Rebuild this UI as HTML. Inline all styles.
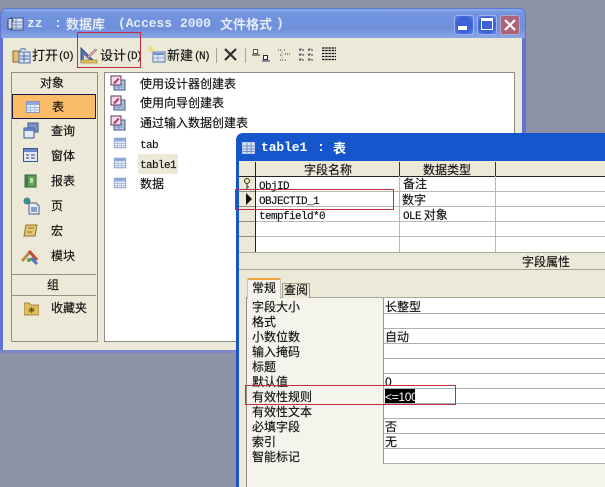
<!DOCTYPE html>
<html><head><meta charset="utf-8"><style>
html,body{margin:0;padding:0}
body{width:605px;height:487px;overflow:hidden;position:relative;background:#8e92a6;font-family:"Liberation Sans","Noto Sans CJK SC",sans-serif;color:#111;filter:blur(.3px)}
div,span,svg{position:absolute;box-sizing:border-box}
.t{white-space:nowrap;font-size:12px;line-height:14px;font-family:"Noto Sans CJK SC",sans-serif;transform:translateY(-7px);-webkit-text-stroke:.15px #111}
.m{font-family:"Liberation Mono","Noto Sans CJK SC",monospace;font-size:11px;letter-spacing:-.6px;transform:translateY(-5px)}
.b{font-size:11px;letter-spacing:-1.6px}
.tt{white-space:nowrap;font-weight:bold;color:#e6ebf6;font-size:13px;line-height:16px;transform:translateY(-8px);font-family:"Noto Sans CJK SC",sans-serif}
.ttm{font-family:"Liberation Mono",monospace;font-size:13px;letter-spacing:-.1px}
.h{height:1px;background:#a9a89c}
.v{width:1px;background:#a9a89c}
.red{border:1px solid #c0303c}
</style></head><body>
<svg width="0" height="0" style="left:0;top:0"><defs>
<symbol id="tb" viewBox="0 0 16 16"><rect x="1.5" y="2.5" width="13" height="11" fill="#e8eefa" stroke="#7f98c4"/><rect x="2" y="3" width="12" height="3" fill="#8fa9dc"/><path d="M2 8.5h12M2 11h12M5.5 6v7M10 6v7" stroke="#a9bbdc" fill="none"/></symbol>
<symbol id="wz" viewBox="0 0 16 16"><rect x="4" y="5" width="11" height="10" fill="#b9c8e4" stroke="#41598c"/><path d="M5 9h9M5 12h9M9 6v8" stroke="#7f96c2"/><rect x="1" y="1" width="10" height="9" fill="#f1dfe8" stroke="#5a3a66"/><path d="M3 8l5-5 1.500 1-4.500 5z" fill="#b52a6a"/></symbol>
</defs></svg>

<!-- main window -->
<div style="left:0;top:8px;width:526px;height:345px;background:#6272cf;border-radius:7px 7px 0 0"></div>
<div style="left:1px;top:9px;width:524px;height:29px;border-radius:6px 6px 0 0;background:linear-gradient(#8ab0ee 0,#7294e0 4px,#6f8fdc 20px,#87a5e4 28px)"></div>
<div style="left:3px;top:38px;width:519px;height:312px;background:#ece9d8"></div>
<div style="left:0;top:350px;width:526px;height:3px;background:#7a86c8"></div>

<svg style="left:7px;top:15px" width="17" height="17" viewBox="0 0 17 17"><rect x="4" y="3" width="12" height="12" fill="#dfe8f8" stroke="#34508c"/><path d="M5 7h10M5 10h10M5 13h10M9 4v10" stroke="#6f88bb"/><ellipse cx="3.5" cy="5" rx="2.5" ry="1.5" fill="#eef" stroke="#345"/><path d="M1 5v9h4V5" fill="#cbd8ee" stroke="#345"/></svg>
<span class="tt ttm" style="left:27px;top:24px">zz</span>
<span class="tt ttm" style="left:54px;top:24px">:</span>
<span class="tt" style="left:66px;top:24px">数据库</span>
<span class="tt ttm" style="left:118px;top:24px">(Access</span>
<span class="tt ttm" style="left:180px;top:24px">2000</span>
<span class="tt" style="left:220px;top:24px">文件格式</span>
<span class="tt ttm" style="left:276px;top:24px">)</span>

<div style="left:454px;top:15px;width:20px;height:20px;border-radius:3px;background:radial-gradient(#3c62d8 60%,#6d8ce4);border:1px solid #9fb4ec"><div style="left:3px;top:10px;width:9px;height:4px;background:#fff"></div></div>
<div style="left:477px;top:15px;width:20px;height:20px;border-radius:3px;background:radial-gradient(#3c62d8 60%,#6d8ce4);border:1px solid #9fb4ec"><div style="left:3px;top:2px;width:12px;height:12px;border:1px solid #fff;border-top-width:3px"></div></div>
<div style="left:500px;top:15px;width:20px;height:20px;border-radius:3px;background:#ad6478;border:1px solid #b4a8c8"><svg style="left:3px;top:3px" width="12" height="12"><path d="M1 1l10 10M11 1L1 11" stroke="#fff" stroke-width="2.2"/></svg></div>

<!-- toolbar -->
<svg style="left:12px;top:46px" width="19" height="18" viewBox="0 0 19 18"><path d="M1 5h6l2 2v9H1z" fill="#e3bd72" stroke="#8c6a2c"/><rect x="7" y="6" width="11" height="11" fill="#dbe5f5" stroke="#4b6aa5"/><path d="M8 10h9M8 13h9M12 7v9" stroke="#4b6aa5"/><path d="M8 5c1-3 4-3 6-1" stroke="#6a8fbf" fill="none" stroke-width="1.5"/></svg>
<span class="t" style="left:32px;top:55px;font-size:13px">打开</span>
<span class="t m b" style="left:58px;top:55px">(O)</span>
<svg style="left:80px;top:46px" width="18" height="18" viewBox="0 0 18 18"><path d="M1 2v14h14z" fill="#5a74b8" stroke="#3a4a80"/><path d="M4 9v5h5z" fill="#ece9d8"/><rect x="1" y="14" width="16" height="3" fill="#e2c45c" stroke="#8e7a2c" stroke-width=".6"/><path d="M7 11l8-8 2 1-8 8z" fill="#d8a0a0" stroke="#8c6060" stroke-width=".5"/></svg>
<span class="t" style="left:100px;top:55px;font-size:13px">设计</span>
<span class="t m b" style="left:126px;top:55px">(D)</span>
<svg style="left:148px;top:46px" width="18" height="18" viewBox="0 0 18 18"><rect x="5" y="6" width="12" height="10" fill="#dfe8f8" stroke="#5674a8"/><rect x="6" y="7" width="10" height="2" fill="#6f8fcc"/><path d="M6 12h10M10 9v7" stroke="#91a6cc"/><path d="M3 0v7M0 3.500h7M1 1l4 4M5 1L1 5" stroke="#eedb70"/></svg>
<span class="t" style="left:167px;top:55px;font-size:13px">新建</span>
<span class="t m b" style="left:194px;top:55px">(N)</span>
<div style="left:216px;top:48px;width:1px;height:15px;background:#a5a397"></div>
<div style="left:245px;top:48px;width:1px;height:15px;background:#a5a397"></div>
<svg style="left:223px;top:47px" width="15" height="15"><path d="M2 2l11 11M13 2L2 13" stroke="#2d2d2d" stroke-width="2.2"/></svg>
<svg style="left:252px;top:48px" width="18" height="15" viewBox="0 0 18 15"><rect x="1.500" y="1.500" width="4" height="4" fill="#fff" stroke="#555"/><path d="M0 7h8" stroke="#222"/><rect x="11.500" y="7.500" width="4" height="4" fill="#fff" stroke="#224"/><path d="M10 13h8" stroke="#224"/></svg>
<svg style="left:277px;top:48px" width="15" height="15" viewBox="0 0 15 15"><path d="M1 2h4M7 2h1M3 7h2M8 6h5M3 12h3M8 12h2" stroke="#333" stroke-dasharray="1 1"/><path d="M5 3v8" stroke="#888" stroke-dasharray="1 1"/></svg>
<svg style="left:299px;top:48px" width="16" height="15" viewBox="0 0 16 15"><path d="M0 2h6M9 2h6M0 7h6M9 7h6M0 12h6M9 12h6" stroke="#333" stroke-dasharray="2 1"/><path d="M0 1h3M0 6h3M0 11h3M9 1h3M9 6h3M9 11h3" stroke="#778" /></svg>
<svg style="left:321px;top:47px" width="16" height="15" viewBox="0 0 16 15"><path d="M1 1h14M1 3.500h14M1 6.500h14M1 9.500h14M1 12.500h14" stroke="#111" stroke-width="1.200" stroke-dasharray="2.500 .7"/></svg>

<!-- left panel -->
<div style="left:11px;top:72px;width:87px;height:270px;border:1px solid #8f8e84"></div>
<div style="left:12px;top:94px;width:84px;height:25px;background:#fbbc69;border:1px solid #1c1c3c"></div>
<span class="t" style="left:40px;top:83px">对象</span>
<span class="t" style="left:52px;top:107px">表</span>
<span class="t" style="left:51px;top:131px">查询</span>
<span class="t" style="left:51px;top:156px">窗体</span>
<span class="t" style="left:51px;top:181px">报表</span>
<span class="t" style="left:51px;top:206px">页</span>
<span class="t" style="left:51px;top:231px">宏</span>
<span class="t" style="left:51px;top:256px">模块</span>
<div class="h" style="left:12px;top:274px;width:84px;background:#94938a"></div>
<span class="t" style="left:47px;top:285px">组</span>
<div class="h" style="left:12px;top:295px;width:84px;background:#94938a"></div>
<span class="t" style="left:51px;top:308px">收藏夹</span>

<svg style="left:25px;top:99px" width="16" height="16"><use href="#tb"/></svg>
<svg style="left:23px;top:122px" width="16" height="17" viewBox="0 0 16 17"><rect x="5" y="1" width="10" height="9" fill="#7b94c8" stroke="#3d578f"/><rect x="1" y="6" width="10" height="10" fill="#e4ebf8" stroke="#3d578f"/><rect x="1" y="6" width="10" height="3" fill="#6480bd"/></svg>
<svg style="left:23px;top:148px" width="16" height="15" viewBox="0 0 16 15"><rect x=".5" y=".5" width="14" height="13" fill="#dfe8f8" stroke="#3d578f"/><rect x="1" y="1" width="13" height="3" fill="#6a88c8"/><path d="M3 7h3M3 10h3M8 7h4M8 10h4" stroke="#444"/></svg>
<svg style="left:24px;top:174px" width="13" height="14" viewBox="0 0 13 14"><rect x="1" y="1" width="11" height="12" fill="#5fa35a" stroke="#37603a"/><path d="M3 1v12" stroke="#2f4a30"/><rect x="6" y="4" width="3" height="5" fill="#c2e0a0"/></svg>
<svg style="left:23px;top:197px" width="17" height="18" viewBox="0 0 17 18"><circle cx="4" cy="4" r="3.500" fill="#3f8f8f"/><path d="M6 6h7l3 3v8H6z" fill="#e8eef8" stroke="#4a5a85"/><rect x="8" y="10" width="6" height="5" fill="#8a9cc8"/></svg>
<svg style="left:23px;top:223px" width="15" height="15" viewBox="0 0 15 15"><path d="M3 2h11l-2 11H1z" fill="#e5c56e" stroke="#8a7232"/><path d="M5 5h6M4 9h5" stroke="#8a7232"/></svg>
<svg style="left:21px;top:248px" width="19" height="18" viewBox="0 0 19 18"><path d="M1 13l8-9" stroke="#b59040" stroke-width="3"/><path d="M8 3l8 9" stroke="#c04a3a" stroke-width="3"/><path d="M10 10l6 6" stroke="#4a7cc0" stroke-width="3"/><circle cx="8" cy="12" r="2" fill="#5a9a5a"/></svg>
<svg style="left:24px;top:301px" width="15" height="15" viewBox="0 0 15 15"><path d="M0 2h5l2 2h8v10H0z" fill="#e0bd5e" stroke="#8a7232" stroke-width=".7"/><path d="M7.500 6v6M4.500 9h6M5 7l5 4M10 7l-5 4" stroke="#5c4a14" stroke-width=".8"/></svg>

<!-- list -->
<div style="left:104px;top:72px;width:411px;height:270px;background:#fff;border:1px solid #8f8e84"></div>
<svg style="left:110px;top:75px" width="16" height="16"><use href="#wz"/></svg>
<svg style="left:110px;top:95px" width="16" height="16"><use href="#wz"/></svg>
<svg style="left:110px;top:115px" width="16" height="16"><use href="#wz"/></svg>
<svg style="left:113px;top:136px" width="14" height="14" viewBox="0 0 16 16"><use href="#tb"/></svg>
<svg style="left:113px;top:156px" width="14" height="14" viewBox="0 0 16 16"><use href="#tb"/></svg>
<svg style="left:113px;top:176px" width="14" height="14" viewBox="0 0 16 16"><use href="#tb"/></svg>
<div style="left:138px;top:154px;width:40px;height:20px;background:#ece9d8"></div>
<span class="t" style="left:140px;top:84px">使用设计器创建表</span>
<span class="t" style="left:140px;top:103px">使用向导创建表</span>
<span class="t" style="left:140px;top:123px">通过输入数据创建表</span>
<span class="t m" style="left:140px;top:144px">tab</span>
<span class="t m" style="left:140px;top:164px">table1</span>
<span class="t" style="left:140px;top:184px">数据</span>

<!-- red: design -->
<div class="red" style="left:77px;top:32px;width:64px;height:36px"></div>

<!-- table window -->
<div style="left:236px;top:133px;width:369px;height:354px;background:#1656cc;border-radius:7px 0 0 0"></div>
<div style="left:239px;top:161px;width:366px;height:326px;background:#ece9d8"></div>
<svg style="left:242px;top:142px" width="13" height="12" viewBox="0 0 13 12"><rect x=".5" y=".5" width="12" height="11" fill="#dde6f6" stroke="#b9c8ea"/><path d="M1 4h11M1 7h11M1 9.500h11M5 1v10M9 1v10" stroke="#6f8cc8"/></svg>
<span class="tt ttm" style="left:261px;top:148px;color:#fff">table1</span>
<span class="tt ttm" style="left:317px;top:148px;color:#fff">:</span>
<span class="tt" style="left:333px;top:148px;color:#fff">表</span>

<!-- grid -->
<div style="left:255px;top:176px;width:350px;height:76px;background:#fff"></div>
<div class="h" style="left:239px;top:176px;width:366px;background:#222"></div>
<div class="h" style="left:255px;top:191px;width:350px;background:#b9b9b0"></div>
<div class="h" style="left:255px;top:206px;width:350px;background:#b9b9b0"></div>
<div class="h" style="left:255px;top:221px;width:350px;background:#b9b9b0"></div>
<div class="h" style="left:255px;top:236px;width:350px;background:#b9b9b0"></div>
<div class="h" style="left:239px;top:252px;width:366px;background:#a7a69a"></div>
<div class="h" style="left:239px;top:191px;width:16px;background:#8f8e84"></div>
<div class="h" style="left:239px;top:206px;width:16px;background:#8f8e84"></div>
<div class="h" style="left:239px;top:221px;width:16px;background:#8f8e84"></div>
<div class="h" style="left:239px;top:236px;width:16px;background:#8f8e84"></div>
<div style="left:255px;top:162px;width:1px;height:90px;background:#222"></div>
<div style="left:399px;top:162px;width:1px;height:14px;background:#333"></div>
<div style="left:495px;top:162px;width:1px;height:14px;background:#333"></div>
<div class="v" style="left:399px;top:176px;height:76px;background:#b9b9b0"></div>
<div class="v" style="left:495px;top:176px;height:76px;background:#b9b9b0"></div>
<span class="t" style="left:304px;top:170px">字段名称</span>
<span class="t" style="left:423px;top:170px">数据类型</span>
<svg style="left:241px;top:178px" width="12" height="12" viewBox="0 0 12 12"><circle cx="6" cy="3" r="2.500" fill="#f2e9a6" stroke="#333"/><path d="M6 5.500V11M6 9h2" stroke="#333" fill="none"/></svg>
<svg style="left:245px;top:193px" width="8" height="12"><path d="M1 0l6 6-6 6z" fill="#111"/></svg>
<span class="t m" style="left:259px;top:185px">ObjID</span>
<span class="t m" style="left:259px;top:200px">OBJECTID_1</span>
<span class="t m" style="left:259px;top:215px">tempfield*0</span>
<span class="t" style="left:403px;top:184px">备注</span>
<span class="t" style="left:402px;top:200px">数字</span>
<span class="t" style="left:403px;top:215px"><span style="position:static;font-family:'Liberation Mono';font-size:11px;letter-spacing:-.6px">OLE</span> 对象</span>
<div class="red" style="left:235px;top:189px;width:159px;height:21px"></div>

<span class="t" style="left:522px;top:262px">字段属性</span>
<div class="h" style="left:239px;top:269px;width:366px;background:#a7a69a"></div>

<!-- tabs panel -->
<div style="left:246px;top:297px;width:359px;height:190px;background:#f5f4ec;border-left:1px solid #8f8e84;border-top:1px solid #a9a89c"></div>
<div style="left:282px;top:283px;width:28px;height:15px;background:#ece9d8;border:1px solid #9d9c90;border-bottom:0"></div>
<div style="left:247px;top:278px;width:34px;height:21px;background:#f5f4ec;border:1px solid #c2c1b4;border-top:2px solid #eea33c;border-bottom:0;border-radius:2px 2px 0 0"></div>
<span class="t" style="left:252px;top:288px">常规</span>
<span class="t" style="left:284px;top:290px">查阅</span>

<!-- property grid -->
<div style="left:383px;top:298px;width:222px;height:166px;background:#fff;border-left:1px solid #8f98a4"></div>
<div class="h" style="left:383px;top:313px;width:222px;background:#a6b0bb"></div>
<div class="h" style="left:383px;top:328px;width:222px;background:#a6b0bb"></div>
<div class="h" style="left:383px;top:343px;width:222px;background:#a6b0bb"></div>
<div class="h" style="left:383px;top:358px;width:222px;background:#a6b0bb"></div>
<div class="h" style="left:383px;top:373px;width:222px;background:#a6b0bb"></div>
<div class="h" style="left:383px;top:388px;width:222px;background:#a6b0bb"></div>
<div class="h" style="left:383px;top:403px;width:222px;background:#a6b0bb"></div>
<div class="h" style="left:383px;top:418px;width:222px;background:#a6b0bb"></div>
<div class="h" style="left:383px;top:433px;width:222px;background:#a6b0bb"></div>
<div class="h" style="left:383px;top:448px;width:222px;background:#a6b0bb"></div>
<div class="h" style="left:383px;top:463px;width:222px;background:#a6b0bb"></div>
<span class="t" style="left:252px;top:307px">字段大小</span>
<span class="t" style="left:252px;top:322px">格式</span>
<span class="t" style="left:252px;top:337px">小数位数</span>
<span class="t" style="left:252px;top:352px">输入掩码</span>
<span class="t" style="left:252px;top:367px">标题</span>
<span class="t" style="left:252px;top:382px">默认值</span>
<span class="t" style="left:252px;top:397px">有效性规则</span>
<span class="t" style="left:252px;top:412px">有效性文本</span>
<span class="t" style="left:252px;top:427px">必填字段</span>
<span class="t" style="left:252px;top:442px">索引</span>
<span class="t" style="left:252px;top:457px">智能标记</span>
<span class="t" style="left:385px;top:307px">长整型</span>
<span class="t" style="left:385px;top:337px">自动</span>
<span class="t" style="left:385px;top:382px;font-family:'Liberation Sans'">0</span>
<div style="left:385px;top:389px;width:30px;height:14px;background:#000"></div>
<span class="t" style="left:385px;top:397px;color:#fff;-webkit-text-stroke:0;font-family:'Liberation Sans';letter-spacing:-.3px">&lt;=100</span>
<span class="t" style="left:385px;top:427px">否</span>
<span class="t" style="left:385px;top:442px">无</span>
<div class="red" style="left:245px;top:385px;width:211px;height:20px"></div>
</body></html>
